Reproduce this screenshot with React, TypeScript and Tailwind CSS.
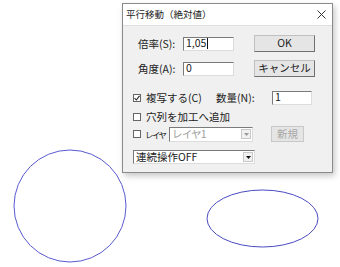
const font = "font-['Noto_Sans_CJK_JP','Noto_Sans',sans-serif]";

function Sunken({ className = "", children }: { className?: string; children?: React.ReactNode }) {
    return (
        <div
            className={`flex items-center whitespace-nowrap border border-t-[#7a7a7a] border-l-[#7a7a7a] border-r-[#dcdcdc] border-b-[#dcdcdc] bg-white pl-[2px] text-[10.5px] leading-none ${className}`}
        >
            {children}
        </div>
    );
}

function Button({ label, className = "", disabled = false }: { label: string; className?: string; disabled?: boolean }) {
    return (
        <div
            className={`flex items-center justify-center whitespace-nowrap border bg-[#e5e5e5] text-[10.5px] leading-none ${
                disabled ? "border-[#c8c8c8] text-[#a8a8a8]" : "border-t-[#c0c0c0] border-l-[#c0c0c0] border-r-[#707070] border-b-[#707070] text-[#222]"
            } ${className}`}
        >
            {label}
        </div>
    );
}

function Check({ checked = false }: { checked?: boolean }) {
    return (
        <div className="flex size-[8px] shrink-0 items-center justify-center border border-[#666] bg-white">
            {checked && (
                <svg width="6" height="6" viewBox="0 0 6 6">
                    <path d="M0.5 3 L2.3 5 L5.5 0.8" fill="none" stroke="#222" strokeWidth="1.1" />
                </svg>
            )}
        </div>
    );
}

function Combo({ text, className = "", disabled = false }: { text: string; className?: string; disabled?: boolean }) {
    return (
        <Sunken className={`justify-between pr-[1px] ${disabled ? "bg-[#f4f4f4] text-[#a0a0a0]" : "text-[#222]"} ${className}`}>
            <span>{text}</span>
            <div className="flex h-[10px] w-[10px] items-center justify-center border border-[#c8c8c8] bg-[#f0f0f0]">
                <svg width="5" height="3" viewBox="0 0 5 3">
                    <path d="M0 0 H5 L2.5 3 Z" fill={disabled ? "#999" : "#111"} />
                </svg>
            </div>
        </Sunken>
    );
}

export default function App() {
    return (
        <div className={`relative h-[267px] w-[340px] overflow-hidden bg-white ${font}`}>
            <svg className="absolute left-0 top-0" width="340" height="267">
                <ellipse cx="70" cy="206" rx="56" ry="56" fill="none" stroke="#5a5ad0" strokeWidth="1" />
                <ellipse cx="262.5" cy="218.5" rx="55.5" ry="28.5" fill="none" stroke="#4a4ac0" strokeWidth="1" />
            </svg>

            <div className="absolute left-[122px] top-[3px] flex h-[170px] w-[211px] flex-col border border-[#8a8a8a] bg-[#f0f0f0] shadow-[2px_3px_6px_rgba(0,0,0,0.22)]">
                <div className="flex h-[22px] items-center justify-between border-b border-[#e0e0e0] bg-white pl-[3px] pr-[6px] text-[9.5px] text-[#222]">
                    <span>平行移動（絶対値）</span>
                    <svg width="9" height="9" viewBox="0 0 9 9">
                        <path d="M0.5 0.5 L8.5 8.5 M8.5 0.5 L0.5 8.5" stroke="#333" strokeWidth="1" />
                    </svg>
                </div>

                <div className="flex flex-col whitespace-nowrap pl-[10px] pt-[9px] text-[10.5px] text-[#222]">
                    <div className="flex items-center">
                        <span className="w-[50px] pl-[5px]">倍率(S):</span>
                        <Sunken className="h-[14px] w-[51px]">
                            <span>1,05</span>
                            <span className="ml-[1px] h-[11px] w-px bg-[#111]" />
                        </Sunken>
                        <Button label="OK" className="ml-[20px] h-[17px] w-[61px] border-[#555]" />
                    </div>
                    <div className="mt-[8px] flex items-center">
                        <span className="w-[50px] pl-[5px]">角度(A):</span>
                        <Sunken className="h-[14px] w-[51px]">0</Sunken>
                        <Button label="キャンセル" className="ml-[20px] h-[17px] w-[61px] text-[9.5px]" />
                    </div>

                    <div className="mt-[13px] flex h-[15px] items-center">
                        <Check checked />
                        <span className="ml-[5px] w-[70px]">複写する(C)</span>
                        <span className="w-[56px]">数量(N):</span>
                        <Sunken className="h-[14px] w-[40px]">1</Sunken>
                    </div>
                    <div className="mt-[4px] flex h-[15px] items-center">
                        <Check />
                        <span className="ml-[5px]">穴列を加工へ追加</span>
                    </div>
                    <div className="mt-[2px] flex h-[16px] items-center">
                        <Check />
                        <span className="ml-[4px] w-[24px] text-[8.5px] tracking-[-1.6px]">レイヤ</span>
                        <Combo text="レイヤ1" disabled className="h-[15px] w-[84px] text-[8.5px] tracking-[-0.8px]" />
                        <Button label="新規" disabled className="ml-[18px] h-[16px] w-[33px]" />
                    </div>
                    <Combo text="連続操作OFF" className="mt-[8px] h-[14px] w-[122px]" />
                </div>
            </div>
        </div>
    );
}
